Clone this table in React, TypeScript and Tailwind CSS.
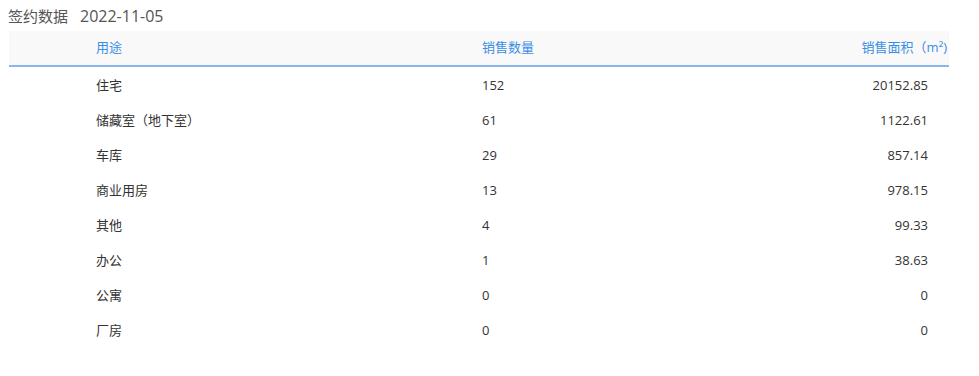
const rows = [
  { use: '住宅', count: '152', area: '20152.85' },
  { use: '储藏室（地下室）', count: '61', area: '1122.61' },
  { use: '车库', count: '29', area: '857.14' },
  { use: '商业用房', count: '13', area: '978.15' },
  { use: '其他', count: '4', area: '99.33' },
  { use: '办公', count: '1', area: '38.63' },
  { use: '公寓', count: '0', area: '0' },
  { use: '厂房', count: '0', area: '0' },
];

export default function App() {
  return (
    <div
      className="w-[979px] h-[376px] bg-white text-[#333] overflow-hidden"
      style={{ fontFamily: '"Open Sans", "Noto Sans CJK SC", sans-serif' }}
    >
      <div className="pl-[8px] pt-[5px] h-[31px] text-[15px] leading-[22px] text-[#555]">
        签约数据<span className="ml-[12px] text-[16px]">2022-11-05</span>
      </div>

      <div className="ml-[9px] w-[940px]">
        {/* header */}
        <div className="flex items-center h-[36px] bg-[#f9f9f9] border-b-2 border-[#86b8ec] text-[13px] text-[#3a8ee6]">
          <div className="w-[473px] pl-[87px]">用途</div>
          <div className="flex-1">销售数量</div>
          <div className="pr-[2px] text-right">销售面积（m²)</div>
        </div>

        <div className="pt-[1px]">
          {rows.map((r) => (
            <div key={r.use} className="flex items-center h-[35px] text-[13px] text-[#333]">
              <div className="w-[473px] pl-[87px]">{r.use}</div>
              <div className="flex-1">{r.count}</div>
              <div className="pr-[21px] text-right">{r.area}</div>
            </div>
          ))}
        </div>
      </div>
    </div>
  );
}
